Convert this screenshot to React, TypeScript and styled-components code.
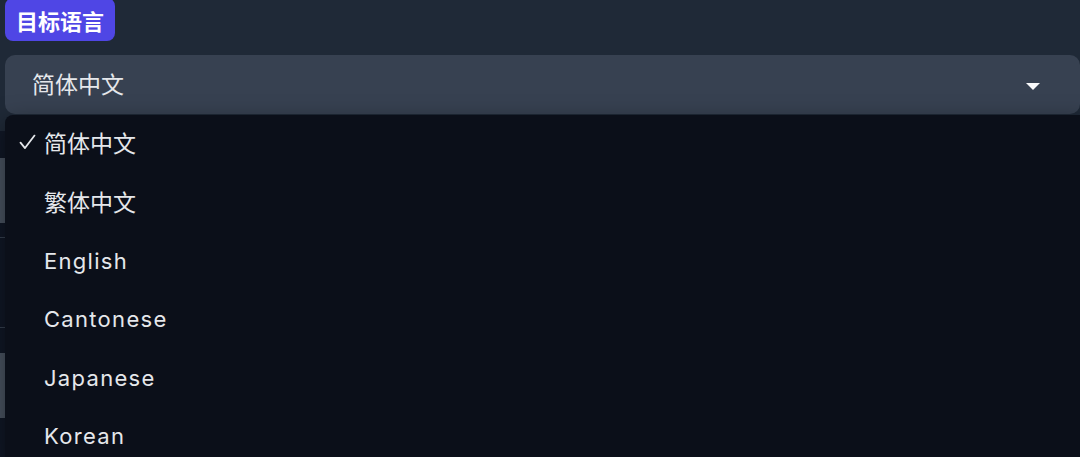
import styled, { createGlobalStyle } from 'styled-components';

const GlobalStyle = createGlobalStyle`
	html, body {
		margin: 0;
		padding: 0;
		background: #1f2937;
		overflow: hidden;
	}
	body {
		font-family: Inter, "Noto Sans CJK SC", sans-serif;
		color: #e5e7eb;
	}
`

const Page = styled.div`
	position: relative;
	height: 457px;
	overflow: hidden;
`

const Field = styled.div`
	position: relative;
	padding-left: 5px;
	display: flex;
	flex-direction: column;
	align-items: flex-start;
`

const Badge = styled.span`
	margin-top: -2px;
	height: 43px;
	display: flex;
	align-items: center;
	padding: 0 11px;
	background: #4f46e5;
	border-radius: 8px;
	color: #fff;
	font-size: 22px;
	font-weight: 700;
	font-family: "Noto Sans CJK SC", sans-serif;
`

const Select = styled.div`
	margin-top: 14px;
	align-self: stretch;
	height: 59px;
	display: flex;
	align-items: center;
	justify-content: space-between;
	padding: 0 40px 0 27px;
	background: #374151;
	border-radius: 10px;
	font-size: 23px;
	font-family: "Noto Sans CJK SC", sans-serif;
	color: #e5e7eb;

	span:first-child {
		position: relative;
		top: -2px;
	}
`

const Caret = styled.span`
	width: 0;
	height: 0;
	margin-top: 3px;
	border-left: 7px solid transparent;
	border-right: 7px solid transparent;
	border-top: 7px solid #f9fafb;
`

const Menu = styled.ul`
	position: absolute;
	top: 115px;
	left: 5px;
	right: -10px;
	margin: 0;
	padding: 0;
	list-style: none;
	background: #0b0f19;
	border-radius: 8px;
	box-shadow: 0 8px 24px rgba(0, 0, 0, 0.5);
	z-index: 10;
`

const Option = styled.li`
	position: relative;
	height: 58.4px;
	display: flex;
	align-items: center;
	padding-left: 39px;
	color: #e5e7eb;
`

const Label = styled.span<{ $cjk?: boolean }>`
	position: relative;
	top: ${p => p.$cjk ? '-2px' : '0'};
	font-size: ${p => p.$cjk ? '23px' : '22px'};
	font-family: ${p => p.$cjk ? '"Noto Sans CJK SC", sans-serif' : 'Inter, sans-serif'};
	letter-spacing: ${p => p.$cjk ? '0' : '1.3px'};
`

const Check = styled.svg`
	position: absolute;
	left: 14px;
	top: 50%;
	transform: translateY(-62%);
`

const Hidden = styled.div`
	margin-top: 17px;
	background: #111827;
	padding-top: 27px;
	height: 330px;
`

const HiddenInput = styled.div`
	height: 65px;
	background: #4b5563;
`

const Divider = styled.div<{ $gap: number }>`
	margin-top: ${p => p.$gap}px;
	height: 1px;
	background: #374151;
`

const options = [
	{ label: '简体中文', cjk: true, selected: true },
	{ label: '繁体中文', cjk: true },
	{ label: 'English' },
	{ label: 'Cantonese' },
	{ label: 'Japanese' },
	{ label: 'Korean' },
]

export default function App() {
	return (
		<Page>
			<GlobalStyle />
			<Field>
				<Badge>目标语言</Badge>
				<Select>
					<span>简体中文</span>
					<Caret />
				</Select>
			</Field>
			<Hidden>
				<HiddenInput />
				<Divider $gap={14} />
				<Divider $gap={89} />
				<HiddenInput style={{ marginTop: 25 }} />
			</Hidden>
			<Menu>
				{options.map(o => (
					<Option key={o.label}>
						{o.selected && (
							<Check width="17" height="16" viewBox="0 0 17 16" fill="none">
								<polyline points="1.5,8.5 6,14 15.5,1.5" stroke="#e5e7eb" strokeWidth="1.8" strokeLinecap="round" strokeLinejoin="round" />
							</Check>
						)}
						<Label $cjk={o.cjk}>{o.label}</Label>
					</Option>
				))}
			</Menu>
		</Page>
	);
}
